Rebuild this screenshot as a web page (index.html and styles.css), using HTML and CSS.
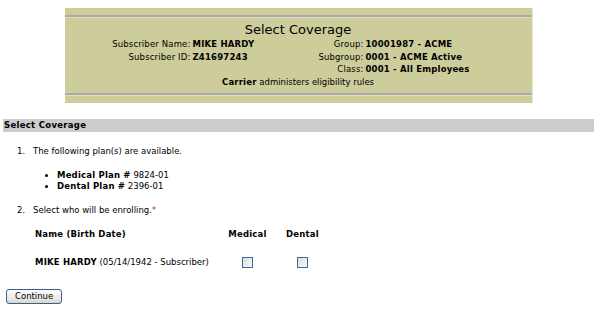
FILE: index.html
```html
<!DOCTYPE html>
<html>
<head>
  <meta charset="UTF-8">
  <title>Select Coverage</title>
  <link rel="stylesheet" href="styles.css">
</head>
<body>
  <div class="banner">
    <div class="rule"></div>
    <div class="banner-title">Select Coverage</div>
    <div class="info">
      <span class="lbl">Subscriber Name:</span><b>MIKE HARDY</b>
      <span class="lbl">Group:</span><b>10001987 - ACME</b>
      <span class="lbl">Subscriber ID:</span><b>Z41697243</b>
      <span class="lbl">Subgroup:</span><b>0001 - ACME Active</b>
      <span></span><span></span>
      <span class="lbl">Class:</span><b>0001 - All Employees</b>
    </div>
    <div class="carrier"><b>Carrier</b> administers eligibility rules</div>
    <div class="rule"></div>
  </div>

  <div class="section-bar">Select Coverage</div>

  <div class="step first">
    <span class="num">1.</span>
    <div class="step-body">
      The following plan(s) are available.
      <ul class="plans">
        <li><b>Medical Plan #</b> 9824-01</li>
        <li><b>Dental Plan #</b> 2396-01</li>
      </ul>
    </div>
  </div>

  <div class="step">
    <span class="num">2.</span>
    <div class="step-body">
      Select who will be enrolling.<span class="req">*</span>
      <table class="enroll">
        <tr class="head">
          <th class="name">Name (Birth Date)</th>
          <th>Medical</th>
          <th>Dental</th>
        </tr>
        <tr>
          <td class="name"><b>MIKE HARDY</b> (05/14/1942 - Subscriber)</td>
          <td><input type="checkbox"></td>
          <td><input type="checkbox"></td>
        </tr>
      </table>
    </div>
  </div>

  <button class="continue">Continue</button>
</body>
</html>
```

FILE: styles.css
```css
body {
  margin: 8px 6px 0 3px;
  font-family: "DejaVu Sans", Verdana, sans-serif;
  font-size: 8.5px;
  color: #000;
  background: #fff;
}
b, th {
  letter-spacing: 0.2px;
}
.banner {
  width: 467px;
  margin: 0 auto;
  background: #cdcc9b;
  padding: 7px 0;
  border-right: 1px solid #e6e5c6;
}
.rule {
  height: 2px;
  background: #aaa;
  border-bottom: 1px solid #dcdcc0;
}
.banner-title {
  text-align: center;
  font-size: 13px;
  line-height: 16px;
  margin-top: 4px;
}
.info {
  display: grid;
  grid-template-columns: 128px 107px 66px 1fr;
  line-height: 12.5px;
}
.lbl {
  text-align: right;
  padding-right: 2px;
  letter-spacing: 0.15px;
}
.carrier {
  text-align: center;
  line-height: 13px;
  margin-bottom: 4px;
}
.section-bar {
  margin-top: 16px;
  background: #cccccc;
  font-weight: bold;
  line-height: 13px;
  padding-left: 1px;
  letter-spacing: 0.3px;
}
.step {
  display: flex;
  padding-left: 14px;
  line-height: 11px;
  margin-top: 13px;
}
.step.first {
  margin-top: 14px;
}
.num {
  width: 16px;
  flex: none;
}
.plans {
  margin: 13px 0 0;
  padding-left: 24px;
}
.req {
  color: #e02020;
}
.enroll {
  border-collapse: collapse;
  margin-top: 13px;
  margin-left: 2px;
  font-size: 8.5px;
}
.enroll th {
  text-align: center;
  padding: 0 0 16px;
  width: 55px;
  line-height: 11px;
}
.enroll td {
  text-align: center;
  padding: 0;
  height: 13px;
}
.enroll .name {
  text-align: left;
  width: 185px;
}
.enroll input {
  appearance: none;
  display: block;
  width: 11px;
  height: 11px;
  margin: 0 auto;
  border: 1px solid #3d6a9a;
  background: linear-gradient(135deg, #dcdcd8, #fafafa);
}
.continue {
  margin: 20px 0 0 3px;
  font-family: "DejaVu Sans", Verdana, sans-serif;
  font-size: 8.5px;
  padding: 0 8px;
  height: 15px;
  border: 1px solid #3b5f8e;
  border-radius: 3px;
  background: linear-gradient(#fefefe, #e8e8e0 70%, #d6d3c8);
  color: #000;
}
```
